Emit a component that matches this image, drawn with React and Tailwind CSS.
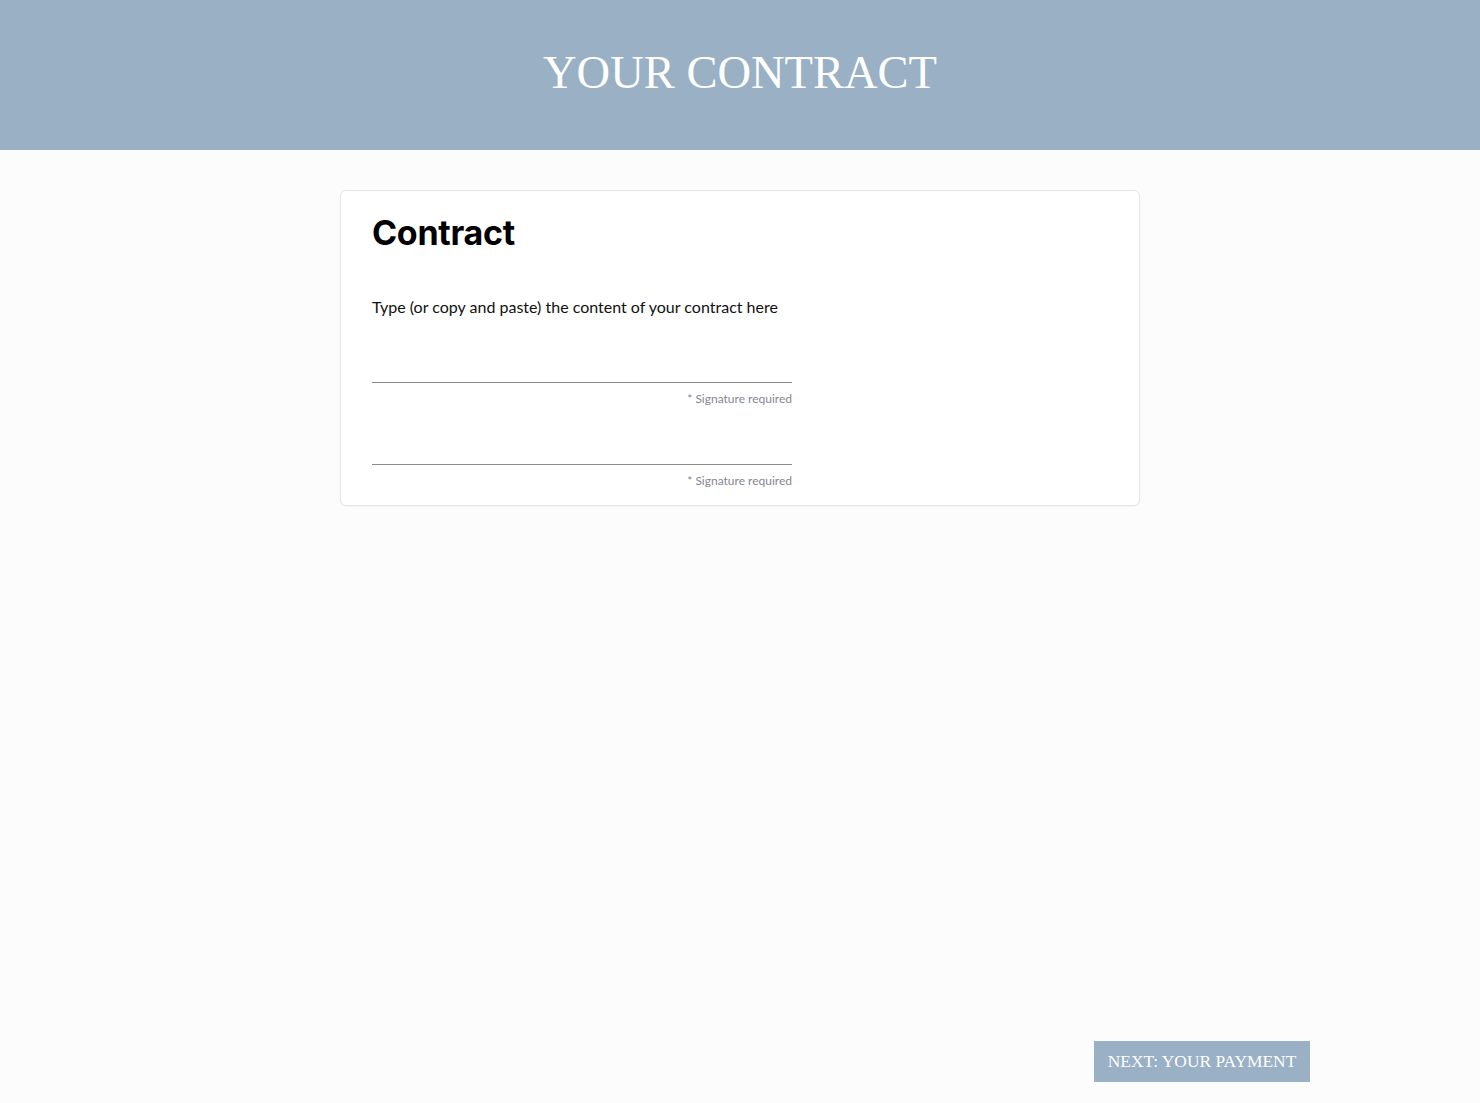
export default function App() {
  return (
    <div className="min-h-screen flex flex-col bg-[#fcfcfc]">
      <header className="h-[150px] bg-[#99b0c5] flex items-center justify-center shrink-0">
        <h1 className="text-white text-[46.5px] leading-none pb-[4px] font-['Liberation_Serif',serif]">
          YOUR CONTRACT
        </h1>
      </header>
      <main className="flex-1 flex flex-col">
        <div className="mx-auto mt-[40px] w-[800px] bg-white border border-[#e6e6e6] rounded-[6px] shadow-[0_1px_2px_rgba(0,0,0,0.04)] px-[31px] pt-[20px] pb-[17px] font-['Inter',sans-serif]">
          <h2 className="text-[34px] leading-[44px] font-bold text-black tracking-[-0.3px]">Contract</h2>
          <p className="mt-[41px] text-[16px] leading-[22px] text-[#111] font-['Lato',sans-serif]">
            Type (or copy and paste) the content of your contract here
          </p>
          <div className="w-[420px]">
            <div className="mt-[64px] border-b border-[#8a8a8a]"></div>
            <div className="mt-[9px] text-right text-[12px] leading-[14px] text-[#868692] font-['Lato',sans-serif]">* Signature required</div>
            <div className="mt-[58px] border-b border-[#8a8a8a]"></div>
            <div className="mt-[9px] text-right text-[12px] leading-[14px] text-[#868692] font-['Lato',sans-serif]">* Signature required</div>
          </div>
        </div>
        <div className="flex-1"></div>
        <div className="w-[1140px] mx-auto flex justify-end pb-[21px]">
          <button className="h-[41px] w-[216px] bg-[#99b0c5] text-white text-[17.4px] font-['Liberation_Serif',serif] flex items-center justify-center">
            NEXT: YOUR PAYMENT
          </button>
        </div>
      </main>
    </div>
  );
}
